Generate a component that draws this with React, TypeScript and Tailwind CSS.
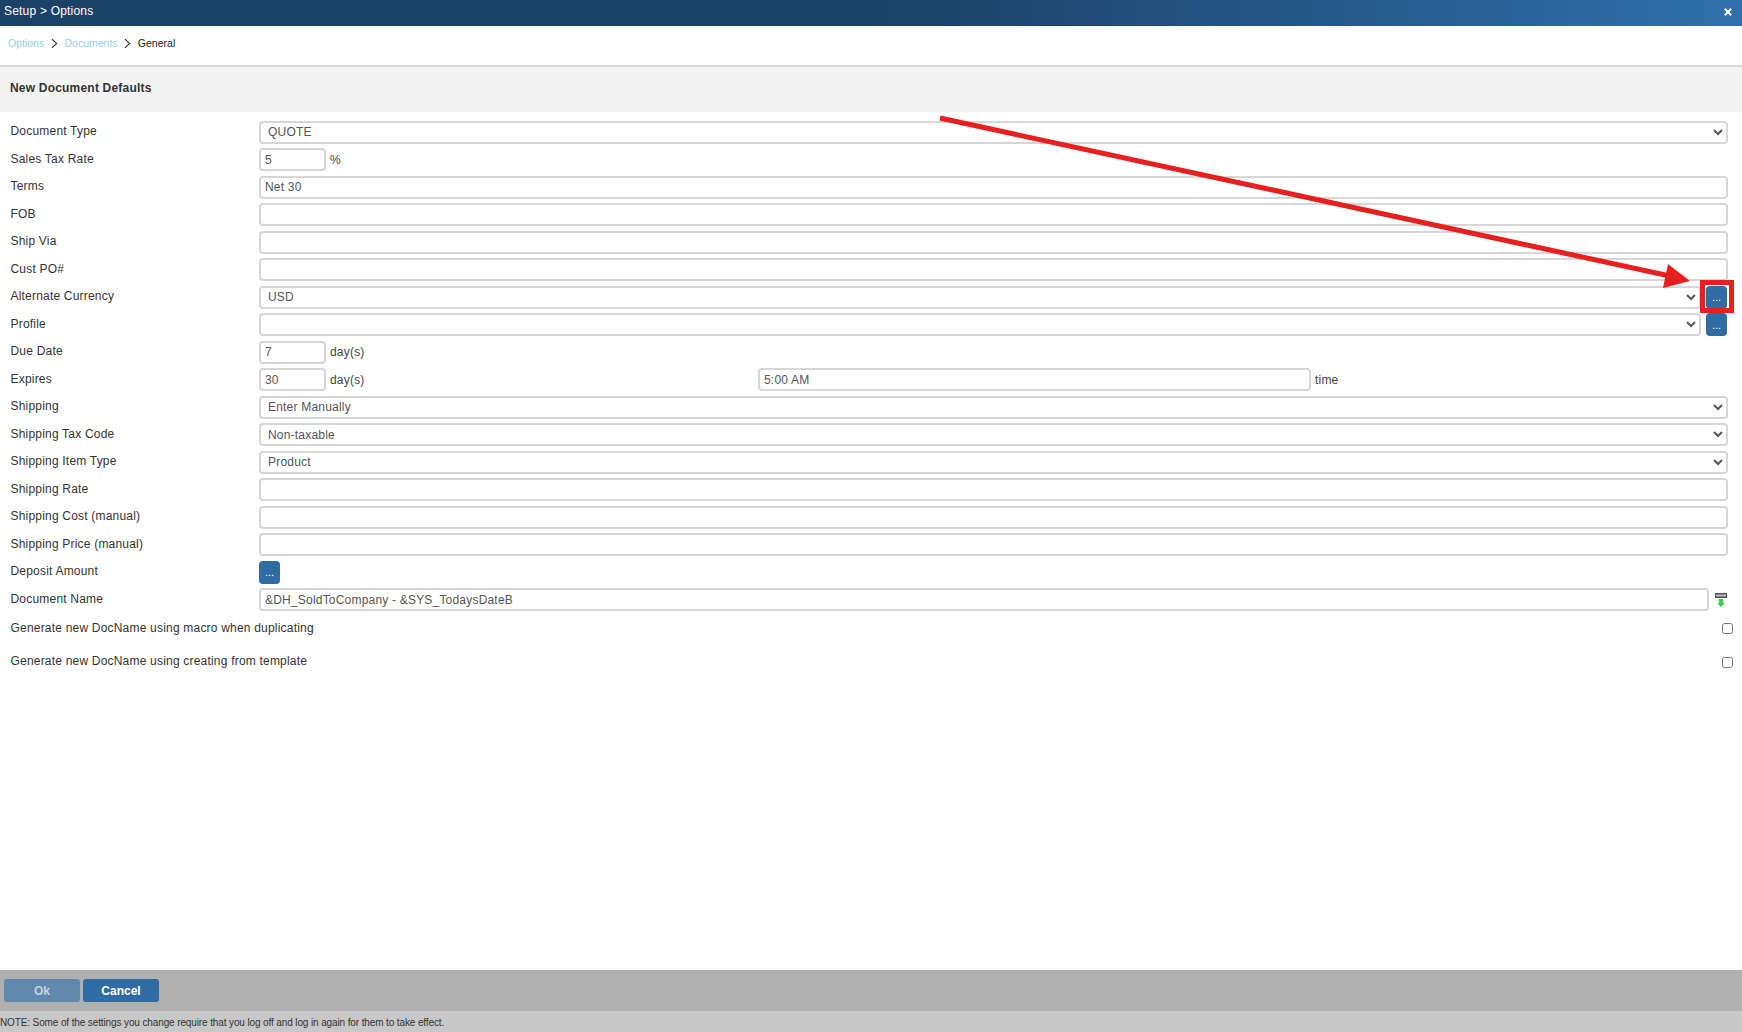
const boxClass =
  "h-[23px] rounded-[4px] border-2 border-[#d6d6d6] bg-white text-[12px] tracking-[0.2px] text-[#555] outline-none";

function Row({ label, children }: { label: string; children?: React.ReactNode }) {
  return (
    <div className="flex h-[27.5px] items-center pr-[14px]">
      <label className="w-[259px] shrink-0 pb-[2.5px] pl-[10.5px] text-[12px] tracking-[0.2px] text-[#333]">{label}</label>
      <div className="flex min-w-0 flex-1 items-center">{children}</div>
    </div>
  );
}

function TextBox({ value = "", className = "flex-1" }: { value?: string; className?: string }) {
  return <input type="text" readOnly value={value} className={`${boxClass} min-w-0 px-1 ${className}`} />;
}

function SelectBox({ value = "", className = "flex-1" }: { value?: string; className?: string }) {
  return (
    <select defaultValue={value} className={`${boxClass} min-w-0 pl-[3px] pr-1 ${className}`}>
      <option value={value}>{value}</option>
    </select>
  );
}

function MoreButton({ className = "" }: { className?: string }) {
  return (
    <button
      type="button"
      className={`flex h-[23px] w-[21px] shrink-0 items-center justify-center rounded-[4px] bg-[#2f6ca3] text-[11px] text-white ${className}`}
    >
      ...
    </button>
  );
}

function Unit({ children, className = "" }: { children: React.ReactNode; className?: string }) {
  return <span className={`ml-[4px] text-[12px] tracking-[0.2px] text-[#444] ${className}`}>{children}</span>;
}

function Chevron() {
  return (
    <svg viewBox="0 0 8 12" className="mx-[6.65px] h-[11px] w-[7px]" fill="none" stroke="#333" strokeWidth="1.3">
      <path d="M1 1l5.5 5-5.5 5" />
    </svg>
  );
}

function Crumbs() {
  return (
    <nav className="flex h-[39px] items-center pb-[4px] pl-[8px] text-[10.5px]">
      <span className="text-[#8fd0ee]">Options</span>
      <Chevron />
      <span className="text-[#8fd0ee]">Documents</span>
      <Chevron />
      <span className="text-[#222]">General</span>
    </nav>
  );
}

function MacroIcon() {
  return (
    <svg viewBox="0 0 12 14" className="ml-[6px] mr-[1px] h-[14px] w-[12px] shrink-0">
      <rect x="0" y="0" width="12" height="5" fill="#555" />
      <rect x="1" y="1.5" width="10" height="2" fill="#bdbdbd" />
      <path d="M4 6h4v4h2l-4 4-4-4h2z" fill="#35d64a" />
    </svg>
  );
}

function CheckRow({ label, className, checkClass = "" }: { label: string; className: string; checkClass?: string }) {
  return (
    <div className={`flex items-center justify-between pl-[10.5px] pr-[9px] ${className}`}>
      <span className="pb-[1px] text-[12px] tracking-[0.2px] text-[#333]">{label}</span>
      <input type="checkbox" className={`h-[11px] w-[11px] ${checkClass}`} />
    </div>
  );
}

export default function App() {
  return (
    <div className="relative flex h-[1032px] flex-col overflow-hidden bg-white font-['Liberation_Sans',Arial,sans-serif]">
      <header className="flex h-[26px] shrink-0 items-center justify-between bg-gradient-to-r from-[#1b4167] from-50% to-[#3070aa] pb-[4px] pl-[4px] pr-[10px] text-[12px] tracking-[0.2px] text-white">
        <span>Setup &gt; Options</span>
        <svg viewBox="0 0 10 10" className="mt-[2px] h-[8px] w-[8px]" stroke="white" strokeWidth="2.4">
          <path d="M1 1l8 8M9 1l-8 8" />
        </svg>
      </header>
      <Crumbs />
      <div className="flex h-[47px] shrink-0 items-center border-t-2 border-[#d8d8d8] bg-[#f4f4f4] pb-[4px] pl-[10px] text-[12px] font-bold tracking-[0.2px] text-[#333]">
        New Document Defaults
      </div>

      <main className="flex-1 pt-[6.5px]">
        <Row label="Document Type">
          <SelectBox value="QUOTE" />
        </Row>
        <Row label="Sales Tax Rate">
          <TextBox value="5" className="w-[67px]" />
          <Unit>%</Unit>
        </Row>
        <Row label="Terms">
          <TextBox value="Net 30" />
        </Row>
        <Row label="FOB">
          <TextBox />
        </Row>
        <Row label="Ship Via">
          <TextBox />
        </Row>
        <Row label="Cust PO#">
          <TextBox />
        </Row>
        <Row label="Alternate Currency">
          <SelectBox value="USD" />
          <MoreButton className="ml-[5px] mr-[1px]" />
        </Row>
        <Row label="Profile">
          <SelectBox />
          <MoreButton className="ml-[5px] mr-[1px]" />
        </Row>
        <Row label="Due Date">
          <TextBox value="7" className="w-[67px]" />
          <Unit>day(s)</Unit>
        </Row>
        <Row label="Expires">
          <TextBox value="30" className="w-[67px]" />
          <Unit className="w-[428px]">day(s)</Unit>
          <TextBox value="5:00 AM" className="w-[553px]" />
          <Unit>time</Unit>
        </Row>
        <Row label="Shipping">
          <SelectBox value="Enter Manually" />
        </Row>
        <Row label="Shipping Tax Code">
          <SelectBox value="Non-taxable" />
        </Row>
        <Row label="Shipping Item Type">
          <SelectBox value="Product" />
        </Row>
        <Row label="Shipping Rate">
          <TextBox />
        </Row>
        <Row label="Shipping Cost (manual)">
          <TextBox />
        </Row>
        <Row label="Shipping Price (manual)">
          <TextBox />
        </Row>
        <Row label="Deposit Amount">
          <MoreButton />
        </Row>
        <Row label="Document Name">
          <TextBox value="&DH_SoldToCompany - &SYS_TodaysDateB" />
          <MacroIcon />
        </Row>
        <CheckRow label="Generate new DocName using macro when duplicating" className="mt-[3px] h-[24px]" />
        <CheckRow
          label="Generate new DocName using creating from template"
          className="mt-[9px] h-[24px]"
          checkClass="mt-[2px]"
        />
      </main>

      <footer className="flex h-[41px] shrink-0 items-center gap-[3px] bg-[#b0b0b0] pl-[4px]">
        <button type="button" className="h-[23px] w-[76px] rounded-[3px] bg-[#6189ae] text-[12px] font-bold text-[#c5d3e0]">
          Ok
        </button>
        <button type="button" className="h-[23px] w-[76px] rounded-[3px] bg-[#2f6ca3] text-[12px] font-bold text-white">
          Cancel
        </button>
      </footer>
      <div className="flex h-[21px] shrink-0 items-center bg-[#c8c8c8] pt-[2px] text-[10px] tracking-[-0.12px] text-[#333]">
        NOTE: Some of the settings you change require that you log off and log in again for them to take effect.
      </div>

      {/* annotation drawn over the page */}
      <svg className="pointer-events-none absolute inset-0 h-[1032px] w-[1742px]" viewBox="0 0 1742 1032">
        <line x1="940" y1="118" x2="1670" y2="276" stroke="#e81f1f" strokeWidth="5" />
        <polygon points="1690,281 1668,264 1663,288" fill="#e81f1f" />
        <rect x="1702.5" y="282.5" width="29" height="28" fill="none" stroke="#e81f1f" strokeWidth="5" />
      </svg>
    </div>
  );
}
